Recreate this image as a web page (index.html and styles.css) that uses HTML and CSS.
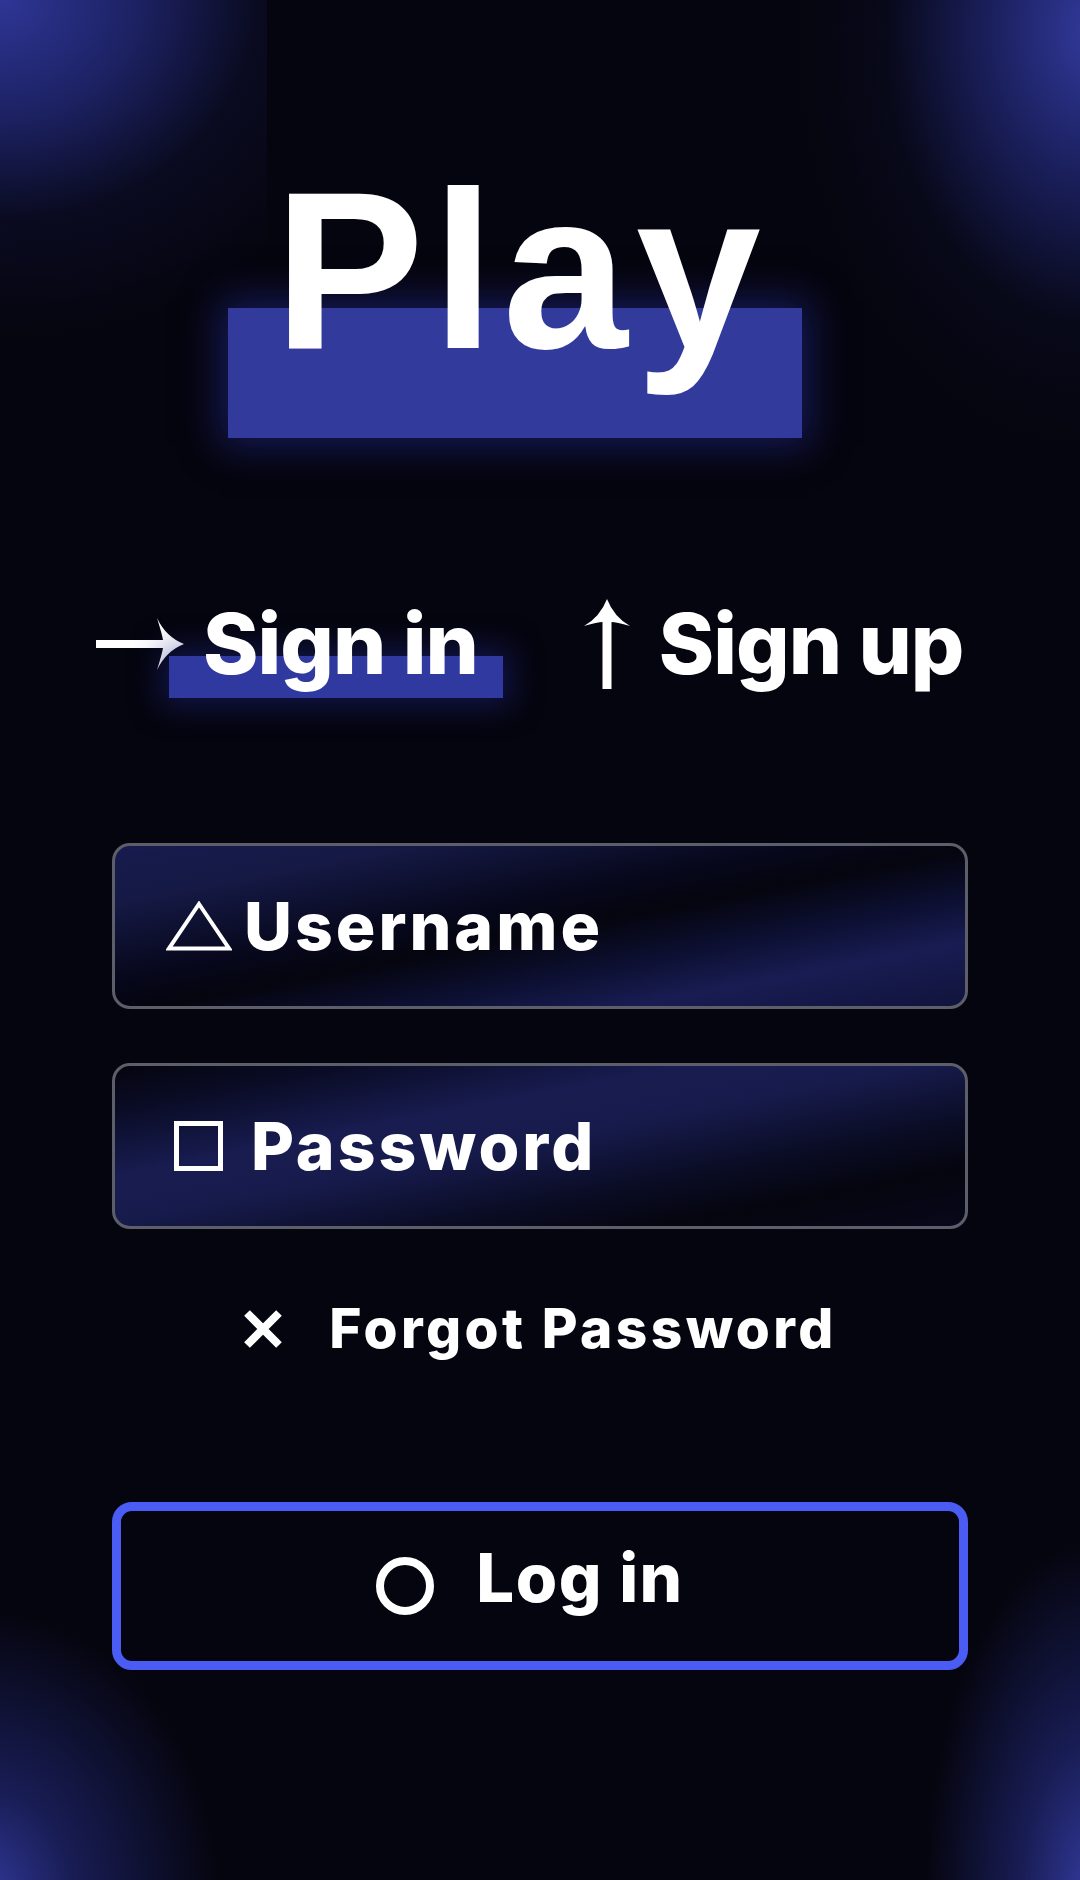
FILE: index.html
```html
<!DOCTYPE html>
<html lang="en">
<head>
<meta charset="utf-8">
<title>Play – Sign in</title>
<link rel="stylesheet" href="styles.css">
</head>
<body>
<main class="screen">
  <h1 class="logo"><span class="logo-text">Play</span></h1>

  <nav class="tabs">
    <a class="tab tab-active" href="#">
      <svg class="ico-right" viewBox="0 0 88 56" aria-hidden="true">
        <path d="M88 28 Q70 35 61 54 Q66 38 67 32 H0 V24 H67 Q66 18 61 2 Q70 21 88 28 Z" fill="#fff"/>
      </svg>
      <span class="tab-label">Sign in</span>
    </a>
    <a class="tab" href="#">
      <svg class="ico-up" viewBox="0 0 46 90" aria-hidden="true">
        <path d="M23 0 Q30 18 46 27 Q32 23 27.5 23 V90 H18.5 V23 Q14 23 0 27 Q16 18 23 0 Z" fill="#fff"/>
      </svg>
      <span class="tab-label">Sign up</span>
    </a>
  </nav>

  <form class="form">
    <label class="field field-user">
      <svg class="ico-tri" viewBox="0 0 66 50" aria-hidden="true">
        <polygon points="33,3 63,47.5 3,47.5" stroke="#fff" stroke-width="4" fill="none"/>
      </svg>
      <span class="field-label">Username</span>
    </label>
    <label class="field field-pass">
      <svg class="ico-sq" viewBox="0 0 49 50" aria-hidden="true">
        <rect x="2.5" y="2.5" width="44" height="45" stroke="#fff" stroke-width="5" fill="none"/>
      </svg>
      <span class="field-label">Password</span>
    </label>

    <a class="forgot" href="#">
      <svg class="ico-x" viewBox="0 0 40 38" aria-hidden="true">
        <path d="M4 3 L36 35 M36 3 L4 35" stroke="#fff" stroke-width="8" fill="none"/>
      </svg>
      <span>Forgot Password</span>
    </a>

    <button class="login" type="button">
      <svg class="ico-circle" viewBox="0 0 58 58" aria-hidden="true">
        <circle cx="29" cy="29" r="25" stroke="#fff" stroke-width="8" fill="none"/>
      </svg>
      <span class="login-label">Log in</span>
    </button>
  </form>
</main>
</body>
</html>
```

FILE: styles.css
```css
* { box-sizing: border-box; }

html, body {
  margin: 0;
  padding: 0;
}

body {
  width: 1080px;
  min-height: 1880px;
  color: #fff;
  font-family: "Inter", "Liberation Sans", sans-serif;
  background-color: #05050f;
  background-image:
    radial-gradient(ellipse 400px 340px at 0 0, rgba(46, 54, 150, 1) 0%, rgba(32, 38, 112, 0.85) 35%, rgba(14, 16, 48, 0.5) 65%, rgba(5, 5, 15, 0) 100%),
    radial-gradient(ellipse 300px 420px at 1095px 30px, rgba(50, 58, 156, 1) 0%, rgba(32, 38, 112, 0.8) 35%, rgba(12, 14, 40, 0.4) 70%, rgba(5, 5, 15, 0) 100%),
    radial-gradient(ellipse 240px 290px at -20px 1900px, rgba(50, 58, 156, 1) 0%, rgba(32, 38, 112, 0.7) 40%, rgba(5, 5, 15, 0) 100%),
    radial-gradient(ellipse 170px 360px at 1095px 1900px, rgba(52, 60, 160, 1) 0%, rgba(32, 38, 112, 0.7) 45%, rgba(5, 5, 15, 0) 100%);
  background-repeat: no-repeat;
  background-size: 267px 400px, 100% 100%, 100% 100%, 100% 100%;
  background-position: 0 0, 0 0, 0 0, 0 0;
}

.screen {
  padding: 158px 112px 0;
  display: flex;
  flex-direction: column;
}

/* Logo */
.logo {
  position: relative;
  margin: 0 0 0 116px;
  width: 574px;
  height: 225px;
  font-family: "Liberation Sans", Arial, sans-serif;
  font-weight: 700;
  font-size: 225px;
  line-height: 225px;
  letter-spacing: 8px;
  padding-left: 46px;
  white-space: nowrap;
  isolation: isolate;
}

.logo::before {
  content: "";
  position: absolute;
  left: 0;
  right: 0;
  top: 150px;
  height: 130px;
  background: #323b9c;
  box-shadow: 0 0 36px 8px rgba(36, 44, 150, 0.55);
  z-index: -1;
}

/* Tabs */
.tabs {
  display: flex;
  align-items: center;
  gap: 106px;
  margin: 219px 0 0 -16px;
  white-space: nowrap;
}

.tab {
  display: flex;
  flex: none;
  align-items: center;
  color: #fff;
  text-decoration: none;
  font-weight: 800;
  font-size: 84px;
  line-height: 84px;
  letter-spacing: -1px;
}

.tab-label {
  position: relative;
  isolation: isolate;
  white-space: nowrap;
}

.tab-active .tab-label {
  margin-left: 19px;
}

.tab-active .tab-label::before {
  content: "";
  position: absolute;
  left: -34px;
  right: -25px;
  top: 54px;
  height: 42px;
  background: #3039a0;
  box-shadow: 0 0 30px 8px rgba(30, 38, 130, 0.5);
  z-index: -1;
}

.tab + .tab .tab-label {
  margin-left: 29px;
}

.ico-right {
  width: 88px;
  height: 56px;
  flex: none;
}

.ico-up {
  width: 46px;
  height: 90px;
  flex: none;
  margin: -3px 0;
}

/* Form */
.form {
  display: flex;
  flex-direction: column;
  margin-top: 157px;
}

.field {
  display: flex;
  align-items: center;
  height: 166px;
  border: 3px solid #5c5f69;
  border-radius: 18px;
  font-weight: 800;
  font-size: 66px;
  line-height: 66px;
  letter-spacing: 3px;
  white-space: nowrap;
}

.field-user {
  padding-left: 51px;
  background: linear-gradient(169deg, #171b4e 0%, #151944 18%, #06071a 42%, #05050f 52%, #0c0f30 66%, #181c52 80%, #11143c 100%);
}

.field-pass {
  margin-top: 54px;
  padding-left: 59px;
  background: linear-gradient(169deg, #05050f 0%, #0a0c26 14%, #181c50 34%, #171b4c 48%, #0a0c24 68%, #05050f 82%, #07081a 100%);
}

.ico-tri {
  width: 66px;
  height: 50px;
  flex: none;
  margin-right: 12px;
}

.ico-sq {
  width: 49px;
  height: 50px;
  flex: none;
  margin-right: 28px;
}

.forgot {
  display: flex;
  align-items: center;
  justify-content: center;
  margin-top: 72px;
  color: #fff;
  text-decoration: none;
  font-weight: 800;
  font-size: 55px;
  line-height: 55px;
  letter-spacing: 3.4px;
  white-space: nowrap;
}

.ico-x {
  width: 40px;
  height: 38px;
  flex: none;
  margin-right: 46px;
}

.login {
  display: flex;
  align-items: center;
  justify-content: center;
  margin-top: 146px;
  height: 168px;
  padding: 0 20px 0 0;
  border: 9px solid #4b5cf5;
  border-radius: 20px;
  background: #05050f;
  color: #fff;
  font-family: "Inter", "Liberation Sans", sans-serif;
  font-weight: 800;
  font-size: 67px;
  line-height: 67px;
  letter-spacing: 1.5px;
  white-space: nowrap;
  cursor: pointer;
}

.ico-circle {
  width: 58px;
  height: 58px;
  flex: none;
  margin-right: 42px;
}

.login-label {
  padding-bottom: 18px;
}
```
